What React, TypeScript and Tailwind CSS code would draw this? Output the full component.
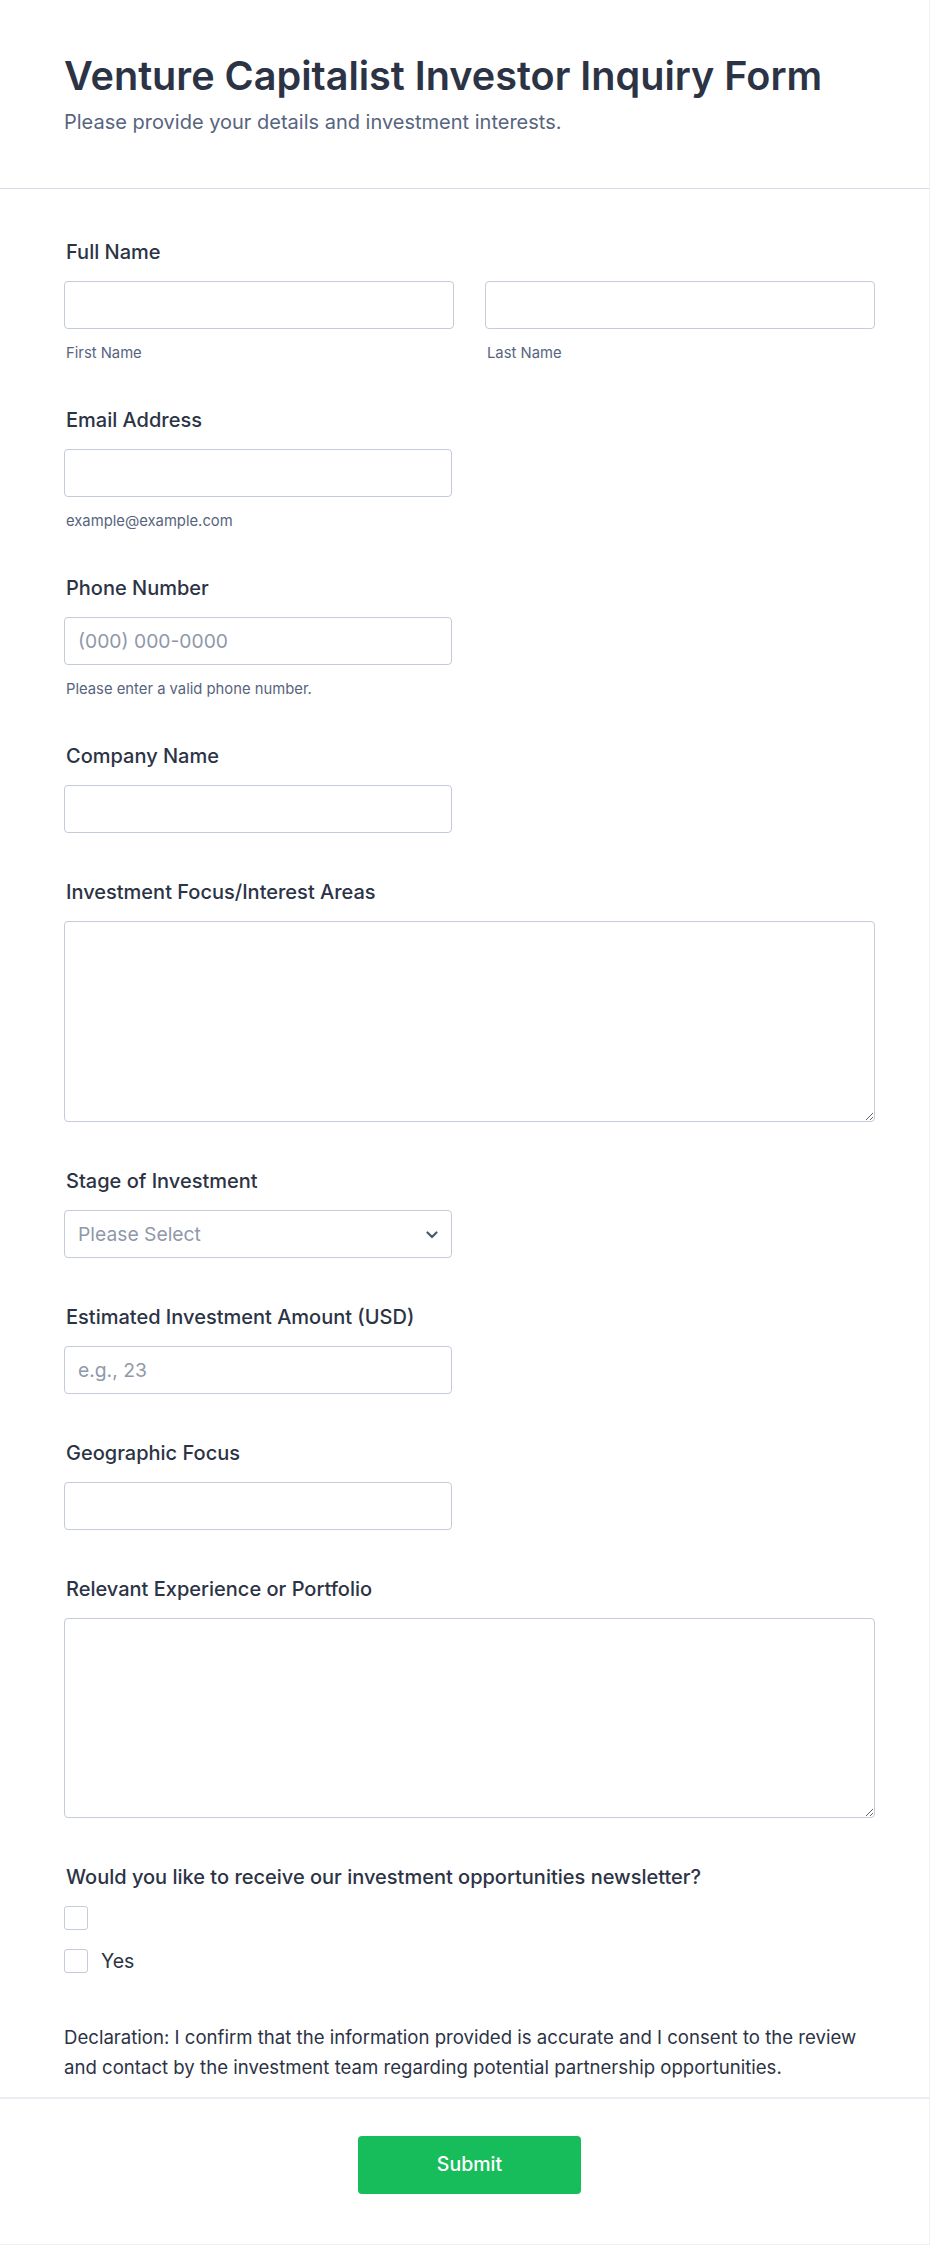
import React from "react";

const font = { fontFamily: "Inter, 'Noto Sans', sans-serif" };

function Label({ children }: { children: React.ReactNode }) {
  return (
    <div className="text-[20px] pl-[2px] leading-[24px] font-medium text-[#2c3345] mb-[17px] whitespace-nowrap">
      {children}
    </div>
  );
}

function Sub({ children }: { children: React.ReactNode }) {
  return (
    <div className="pl-[2px] mt-[16px] text-[14.8px] leading-[16px] text-[#57647e] whitespace-nowrap">
      {children}
    </div>
  );
}

const inputCls =
  "block h-[48px] w-full rounded-[4px] border border-[#c3cad8] bg-white pl-[13px] pr-[13px] text-[19.3px] text-[#2c3345] placeholder:text-[#8f98aa] outline-none";

function Field({ children }: { children: React.ReactNode }) {
  return <div className="mb-[47px]">{children}</div>;
}

export default function App() {
  return (
    <div className="w-[930px] min-h-[2245px] bg-white" style={font}>
      <div className="w-[930px] border-r border-b border-[#f0f0f4] bg-white">
        {/* Header */}
        <div className="pl-[64px] pt-[54px] pb-[54px] border-b border-[#d9dbe6]">
          <h1 className="text-[39.6px] leading-[44px] font-semibold text-[#2c3345] whitespace-nowrap">
            Venture Capitalist Investor Inquiry Form
          </h1>
          <p className="mt-[12px] text-[20px] leading-[24px] text-[#57647e] whitespace-nowrap">
            Please provide your details and investment interests.
          </p>
        </div>

        {/* Body */}
        <div className="pl-[64px] pt-[51px] w-[875px]">
          <Field>
            <Label>Full Name</Label>
            <div className="flex gap-[31px]">
              <div className="w-[390px]">
                <input className={inputCls} />
                <Sub>First Name</Sub>
              </div>
              <div className="w-[390px]">
                <input className={inputCls} />
                <Sub>Last Name</Sub>
              </div>
            </div>
          </Field>

          <Field>
            <Label>Email Address</Label>
            <div className="w-[388px]">
              <input className={inputCls} />
              <Sub>example@example.com</Sub>
            </div>
          </Field>

          <Field>
            <Label>Phone Number</Label>
            <div className="w-[388px]">
              <input className={inputCls} placeholder="(000) 000-0000" />
              <Sub>Please enter a valid phone number.</Sub>
            </div>
          </Field>

          <Field>
            <Label>Company Name</Label>
            <div className="w-[388px]">
              <input className={inputCls} />
            </div>
          </Field>

          <Field>
            <Label>Investment Focus/Interest Areas</Label>
            <textarea className="block h-[201px] w-[811px] rounded-[4px] border border-[#c3cad8] bg-white p-[13px] text-[19px] outline-none" />
          </Field>

          <Field>
            <Label>Stage of Investment</Label>
            <div className="relative w-[388px] h-[48px] rounded-[4px] border border-[#c3cad8] bg-white flex items-center pl-[13px] text-[19.3px] text-[#8f98aa]">
              Please Select
              <svg
                className="absolute right-[13px] top-[20px]"
                width="12"
                height="8"
                viewBox="0 0 12 8"
                fill="none"
              >
                <path
                  d="M1.5 1.5 L6 6 L10.5 1.5"
                  stroke="#4d5873"
                  strokeWidth="2.2"
                  strokeLinecap="round"
                  strokeLinejoin="round"
                />
              </svg>
            </div>
          </Field>

          <Field>
            <Label>Estimated Investment Amount (USD)</Label>
            <div className="w-[388px]">
              <input className={inputCls} placeholder="e.g., 23" />
            </div>
          </Field>

          <Field>
            <Label>Geographic Focus</Label>
            <div className="w-[388px]">
              <input className={inputCls} />
            </div>
          </Field>

          <Field>
            <Label>Relevant Experience or Portfolio</Label>
            <textarea className="block h-[200px] w-[811px] rounded-[4px] border border-[#c3cad8] bg-white p-[13px] text-[19px] outline-none" />
          </Field>

          <div className="mb-[49px]">
            <Label>Would you like to receive our investment opportunities newsletter?</Label>
            <div className="flex flex-col gap-[19px]">
              <div className="flex items-center h-[24px]">
                <span className="block w-[24px] h-[24px] rounded-[3px] border border-[#c3cad8] bg-white" />
              </div>
              <div className="flex items-center h-[24px] gap-[13px]">
                <span className="block w-[24px] h-[24px] rounded-[3px] border border-[#c3cad8] bg-white" />
                <span className="text-[19.5px] leading-[24px] text-[#2c3345]">Yes</span>
              </div>
            </div>
          </div>

          <p className="w-[800px] text-[18.6px] leading-[30px] text-[#2c3345] pb-[15px]">
            Declaration: I confirm that the information provided is accurate and I consent to the review
            and contact by the investment team regarding potential partnership opportunities.
          </p>
        </div>

        {/* Footer */}
        <div className="border-t-2 border-[#ebecf2] pt-[37px] pb-[50px] pl-[64px] w-[929px]">
          <div className="w-[811px] flex justify-center">
            <button className="w-[223px] h-[58px] rounded-[4px] bg-[#18bd5b] text-white text-[19.5px] font-medium">
              Submit
            </button>
          </div>
        </div>
      </div>
    </div>
  );
}
